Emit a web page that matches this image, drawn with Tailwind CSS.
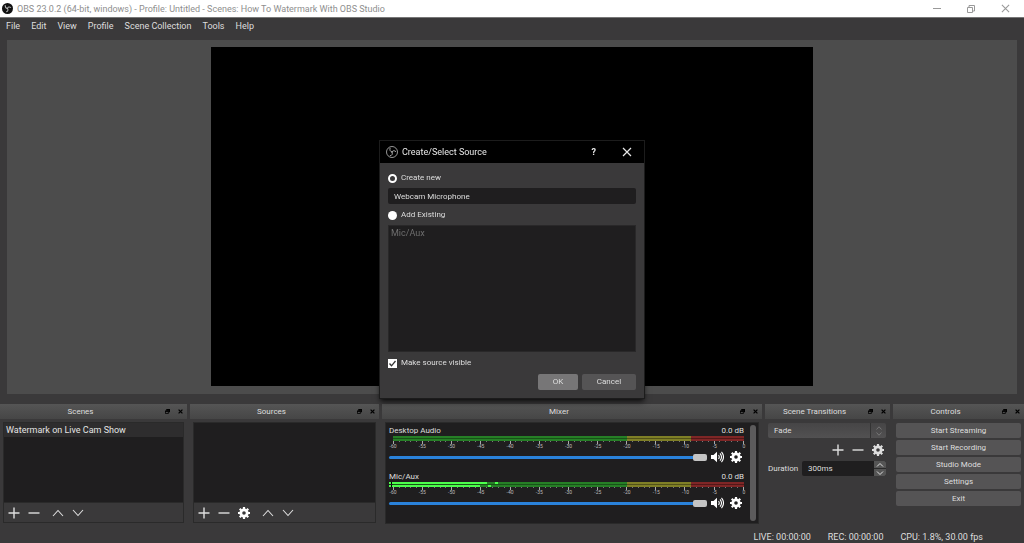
<!DOCTYPE html>
<html lang="en">
<head>
    <meta charset="UTF-8">
    <meta name="viewport" content="width=device-width, initial-scale=1.0">
    <title>OBS 23.0.2</title>
    <script src="https://cdn.jsdelivr.net/npm/@tailwindcss/browser@4"></script>
</head>
<body class="min-h-screen flex flex-col bg-[#3a393a] text-[#dedede] font-[Roboto,sans-serif] text-[8px] leading-3">

<!-- icon set -->
<svg class="hidden">
    <symbol id="logo" viewBox="0 0 24 24">
        <circle cx="12" cy="12" r="11" fill="#000" stroke="currentColor" stroke-width="1.6"/>
        <g fill="none" stroke="currentColor" stroke-width="1.800" stroke-linecap="round">
            <path d="M8 4.500c-1 4 .5 7 4 7.500"/>
            <path d="M19.500 11c-2.500-2.500-6-2.500-7.500 1"/>
            <path d="M8.500 19.500c4-.5 5.500-4 3.500-7.500"/>
        </g>
    </symbol>
    <symbol id="logo-solid" viewBox="0 0 24 24">
        <circle cx="12" cy="12" r="12" fill="#111"/>
        <g fill="none" stroke="currentColor" stroke-width="2.200" stroke-linecap="round">
            <path d="M7 5.500c0 4 1.500 6.500 5 6.500"/>
            <path d="M19 9.500c-3-1.500-6-1-7 2.500"/>
            <path d="M10 19c3-1 4-4 2-7"/>
        </g>
    </symbol>
    <symbol id="plus" viewBox="0 0 12 12"><path d="M6 .5v11M.5 6h11" stroke="currentColor" stroke-width="1.4"/></symbol>
    <symbol id="minus" viewBox="0 0 12 12"><path d="M.5 6h11" stroke="currentColor" stroke-width="1.4"/></symbol>
    <symbol id="up" viewBox="0 0 12 12"><path d="M1 9l5-5.500L11 9" fill="none" stroke="currentColor" stroke-width="1.1"/></symbol>
    <symbol id="down" viewBox="0 0 12 12"><path d="M1 3l5 5.500L11 3" fill="none" stroke="currentColor" stroke-width="1.1"/></symbol>
    <symbol id="gear" viewBox="0 0 12 12">
        <circle cx="6" cy="6" r="3.200" fill="none" stroke="currentColor" stroke-width="2.800"/>
        <path d="M6 0v2M6 10v2M0 6h2M10 6h2M1.760 1.760l1.400 1.400M8.840 8.840l1.400 1.400M1.760 10.240l1.400-1.400M8.840 3.160l1.400-1.400" stroke="currentColor" stroke-width="2.200"/>
    </symbol>
    <symbol id="speaker" viewBox="0 0 13 12">
        <path d="M0 4h2.500L6 .8v10.400L2.500 8H0z" fill="currentColor"/>
        <path d="M7.500 4q1.500 2 0 4M9 2.300q3 3.700 0 7.400M10.500 .8q4 5.200 0 10.400" fill="none" stroke="currentColor" stroke-width="1.100"/>
    </symbol>
    <symbol id="float" viewBox="0 0 6 6">
        <path d="M1.500 0H6v4H4.500V2h-3z" fill="currentColor"/>
        <path d="M.5 2.500h3.500v3H.5z" fill="none" stroke="currentColor"/>
        <path d="M0 2h4.500v1.300H0z" fill="currentColor"/>
    </symbol>
    <symbol id="close" viewBox="0 0 10 10"><path d="M1 1l8 8M9 1L1 9" stroke="currentColor" stroke-width="1.200"/></symbol>
    <symbol id="shut" viewBox="0 0 6 6"><path d="M.7 .7l4.600 4.600M5.300 .7L.7 5.300" stroke="currentColor" stroke-width="1.500"/></symbol>
    <symbol id="restore" viewBox="0 0 8 8"><path d="M.5 2.500h5v5h-5zM2 2V.5h5.500V6H6" fill="none" stroke="currentColor"/></symbol>
</svg>

<header class="h-[17px] flex items-center bg-white text-[#8e8e8e] pl-0.5 pr-3.5 text-[9px]">
    <svg class="size-[11px] text-[#bbb] mr-1"><use href="#logo-solid"/></svg>
    <h1>OBS 23.0.2 (64-bit, windows) - Profile: Untitled - Scenes: How To Watermark With OBS Studio</h1>
    <div class="ml-auto flex items-center gap-[26px] text-[#999]">
        <button aria-label="Minimize"><svg class="w-2 h-2" viewBox="0 0 8 8"><path d="M0 3.500h8" stroke="currentColor"/></svg></button>
        <button aria-label="Restore"><svg class="size-2"><use href="#restore"/></svg></button>
        <button aria-label="Close"><svg class="size-[9px]"><use href="#close"/></svg></button>
    </div>
</header>

<nav class="h-[23px] border-t border-[#777] flex items-start gap-[11px] px-1.5 pt-0.5 text-[9px]">
    <button>File</button>
    <button>Edit</button>
    <button>View</button>
    <button>Profile</button>
    <button>Scene Collection</button>
    <button>Tools</button>
    <button>Help</button>
</nav>

<main class="flex-1 min-h-0 flex justify-center mx-[7px] bg-[#4c4c4c] pt-[7px] pb-2">
    <div class="aspect-video h-[339px] bg-black"></div>
</main>

<div class="grid grid-cols-[minmax(0,187fr)_minmax(0,189fr)_minmax(0,380fr)_minmax(0,125fr)_minmax(0,131fr)] gap-[3px] mt-2.5">
    <section>
        <div class="h-[15px] flex items-center justify-end gap-2 px-1 bg-linear-to-b from-[#555] to-[#464646]">
            <h2 class="flex-1 text-center">Scenes</h2>
            <button class="text-black" aria-label="Float"><svg class="size-[5px]"><use href="#float"/></svg></button>
            <button class="text-black" aria-label="Close dock"><svg class="size-[5px]"><use href="#shut"/></svg></button>
        </div>
        <div class="mx-[3px] mt-[3px] border border-[#2a2a2a]">
            <ul class="h-[79px] bg-[#1f1e1f]">
                <li class="h-[14px] pl-0.5 bg-[#2e2d2e] text-[9px] leading-[14px] text-[#e4e4e4]">Watermark on Live Cam Show</li>
            </ul>
            <div class="h-5 flex items-center gap-2 pl-1 border-t border-[#2a2a2a]">
                <button aria-label="Add scene"><svg class="size-3"><use href="#plus"/></svg></button>
                <button aria-label="Remove scene"><svg class="size-3"><use href="#minus"/></svg></button>
                <button class="ml-1" aria-label="Move scene up"><svg class="size-3"><use href="#up"/></svg></button>
                <button aria-label="Move scene down"><svg class="size-3"><use href="#down"/></svg></button>
            </div>
        </div>
    </section>

    <section>
        <div class="h-[15px] flex items-center justify-end gap-2 px-1 bg-linear-to-b from-[#555] to-[#464646]">
            <h2 class="flex-1 text-center">Sources</h2>
            <button class="text-black" aria-label="Float"><svg class="size-[5px]"><use href="#float"/></svg></button>
            <button class="text-black" aria-label="Close dock"><svg class="size-[5px]"><use href="#shut"/></svg></button>
        </div>
        <div class="mx-[3px] mt-[3px] border border-[#2a2a2a]">
            <div class="h-[79px] bg-[#1f1e1f]"></div>
            <div class="h-5 flex items-center gap-2 pl-1 border-t border-[#2a2a2a]">
                <button aria-label="Add source"><svg class="size-3"><use href="#plus"/></svg></button>
                <button aria-label="Remove source"><svg class="size-3"><use href="#minus"/></svg></button>
                <button class="text-white" aria-label="Source properties"><svg class="size-3"><use href="#gear"/></svg></button>
                <button class="ml-1" aria-label="Move source up"><svg class="size-3"><use href="#up"/></svg></button>
                <button aria-label="Move source down"><svg class="size-3"><use href="#down"/></svg></button>
            </div>
        </div>
    </section>

    <section>
        <div class="h-[15px] flex items-center justify-end gap-2 px-1 bg-linear-to-b from-[#555] to-[#464646]">
            <h2 class="flex-1 text-center">Mixer</h2>
            <button class="text-black" aria-label="Float"><svg class="size-[5px]"><use href="#float"/></svg></button>
            <button class="text-black" aria-label="Close dock"><svg class="size-[5px]"><use href="#shut"/></svg></button>
        </div>
        <div class="mx-[3px] mt-[3px] h-[102px] flex bg-[#1f1e1f] border border-[#2a2a2a] pl-[3px] pr-0.5 py-0.5">
            <div id="mixer" class="flex-1"></div>
            <div class="w-1.5 ml-1.5 rounded-full bg-[#5c5b5c]"></div>
        </div>
    </section>

    <section>
        <div class="h-[15px] flex items-center justify-end gap-2 px-1 bg-linear-to-b from-[#555] to-[#464646]">
            <h2 class="flex-1 text-center">Scene Transitions</h2>
            <button class="text-black" aria-label="Float"><svg class="size-[5px]"><use href="#float"/></svg></button>
            <button class="text-black" aria-label="Close dock"><svg class="size-[5px]"><use href="#shut"/></svg></button>
        </div>
        <div class="pl-[3px] pr-1 pt-1">
            <div class="flex h-[15px] rounded-xs overflow-hidden bg-linear-to-b from-[#464546] to-[#525152]">
                <select aria-label="Transition" class="flex-1 appearance-none px-1.5 outline-none">
                    <option>Fade</option>
                </select>
                <div class="w-4 flex flex-col items-center justify-center border-l border-[#333] text-[#999]">
                    <svg class="size-1.5"><use href="#up"/></svg>
                    <svg class="size-1.5"><use href="#down"/></svg>
                </div>
            </div>
            <div class="h-[23px] flex items-center justify-end gap-2 pr-0.5">
                <button aria-label="Add transition"><svg class="size-3"><use href="#plus"/></svg></button>
                <button aria-label="Remove transition"><svg class="size-3"><use href="#minus"/></svg></button>
                <button aria-label="Transition properties"><svg class="size-3"><use href="#gear"/></svg></button>
            </div>
            <div class="flex items-center gap-1">
                <label for="duration">Duration</label>
                <div class="flex-1 flex h-[15px] rounded-xs overflow-hidden bg-[#1f1e1f]">
                    <input id="duration" value="300ms" class="flex-1 min-w-0 px-1.5 outline-none">
                    <div class="w-3 flex flex-col gap-px bg-[#2a2a2a]">
                        <button class="flex-1 flex items-center justify-center bg-[#555]" aria-label="Increase"><svg class="w-2 h-1.5" viewBox="0 0 8 6"><path d="M1 4.500l3-3 3 3" fill="none" stroke="currentColor"/></svg></button>
                        <button class="flex-1 flex items-center justify-center bg-[#555]" aria-label="Decrease"><svg class="w-2 h-1.5" viewBox="0 0 8 6"><path d="M1 1.500l3 3 3-3" fill="none" stroke="currentColor"/></svg></button>
                    </div>
                </div>
            </div>
        </div>
    </section>

    <section>
        <div class="h-[15px] flex items-center justify-end gap-2 px-1 bg-linear-to-b from-[#555] to-[#464646]">
            <h2 class="flex-1 text-center">Controls</h2>
            <button class="text-black" aria-label="Float"><svg class="size-[5px]"><use href="#float"/></svg></button>
            <button class="text-black" aria-label="Close dock"><svg class="size-[5px]"><use href="#shut"/></svg></button>
        </div>
        <div class="flex flex-col gap-0.5 px-[3px] pt-1">
            <button class="h-[15px] rounded-xs bg-[#555455]">Start Streaming</button>
            <button class="h-[15px] rounded-xs bg-[#555455]">Start Recording</button>
            <button class="h-[15px] rounded-xs bg-[#555455]">Studio Mode</button>
            <button class="h-[15px] rounded-xs bg-[#555455]">Settings</button>
            <button class="h-[15px] rounded-xs bg-[#555455]">Exit</button>
        </div>
    </section>
</div>

<footer class="h-[19px] flex items-end justify-end gap-[17px] pr-[41px] text-[9px]">
    <span>LIVE: 00:00:00</span>
    <span>REC: 00:00:00</span>
    <span>CPU: 1.8%, 30.00 fps</span>
</footer>

<div class="fixed inset-0 flex items-center justify-center">
    <form class="w-[266px] mb-1 bg-[#3a393a] border border-[#1c1c1c] shadow-md shadow-black/60" onsubmit="return false">
        <div class="h-[22px] flex items-center bg-black text-[9px] text-[#e8e8e8] pl-1.5 pr-3">
            <svg class="size-3 mr-1 text-[#bbb]"><use href="#logo"/></svg>
            <h2 class="flex-1">Create/Select Source</h2>
            <button type="button" class="font-bold mr-[26px]" aria-label="Help">?</button>
            <button type="button" aria-label="Close dialog"><svg class="size-[10px]"><use href="#close"/></svg></button>
        </div>
        <div class="px-2 pt-[9px] pb-2">
            <label class="flex items-center gap-1">
                <input type="radio" name="mode" checked class="appearance-none size-[9px] rounded-full bg-white checked:bg-transparent checked:border-2 checked:border-white">
                Create new
            </label>
            <input type="text" aria-label="Source name" value="Webcam Microphone" class="block w-full h-4 mt-1 px-1.5 rounded-xs bg-[#1f1e1f] outline-none">
            <label class="flex items-center gap-1 mt-[5px]">
                <input type="radio" name="mode" class="appearance-none size-[9px] rounded-full bg-white checked:bg-transparent checked:border-2 checked:border-white">
                Add Existing
            </label>
            <ul class="h-[127px] mt-1 px-0.5 pt-px bg-[#1f1e1f] border border-[#292829] text-[9px] text-[#6e6e6e]">
                <li>Mic/Aux</li>
            </ul>
            <label class="flex items-center gap-1 mt-[5px]">
                <span class="grid size-[9px]">
                    <input type="checkbox" checked class="appearance-none col-start-1 row-start-1 size-[9px] bg-white">
                    <svg class="col-start-1 row-start-1 size-[9px]" viewBox="0 0 9 9"><path d="M1.500 4.500l2 2.300L7.500 2" fill="none" stroke="#333" stroke-width="1.300"/></svg>
                </span>
                Make source visible
            </label>
            <div class="flex justify-end gap-1 mt-[5px]">
                <button class="w-10 h-4 rounded-xs bg-[#777677]">OK</button>
                <button type="button" class="w-[54px] h-4 rounded-xs bg-[#555455]">Cancel</button>
            </div>
        </div>
    </form>
</div>

<script>
    // level and peak are percentages of the meter's width
    const channels = [
        { name: 'Desktop Audio', left: [0, 0], right: [0, 0] },
        { name: 'Mic/Aux', left: [28, 29], right: [26, 27] },
    ];

    const level = ([now, peak]) => now ? `
        <div class="relative h-0.5">
            <div class="absolute inset-y-0 -left-1 bg-[#4cff4c]" style="width: ${now}%"></div>
            <div class="absolute inset-y-0 w-[3px] bg-[#4cff4c]" style="left: ${peak}%"></div>
            <div class="absolute inset-y-0 -left-0.5 w-px bg-black"></div>
        </div>` : '<div class="h-0.5"></div>';

    let ticks = '';
    for (let db = 0; db <= 60; db++) {
        ticks += `<div class="w-px ${db % 5 ? 'h-px bg-[#777]' : 'h-[3px] bg-[#aaa]'}"></div>`;
    }

    let labels = '';
    for (let db = -60; db <= 0; db += 5) {
        labels += `<span class="w-0 flex justify-center">${db}</span>`;
    }

    document.getElementById('mixer').innerHTML = channels.map(c => `
        <div class="h-[46px]">
            <div class="flex justify-between h-[11px]"><span>${c.name}</span><span>0.0 dB</span></div>
            <div class="ml-1 grid">
                <div class="col-start-1 row-start-1 flex">
                    <div class="w-[66.67%] bg-[#267f26]"></div>
                    <div class="w-[18.33%] bg-[#7f7f26]"></div>
                    <div class="flex-1 bg-[#7f2626]"></div>
                </div>
                <div class="col-start-1 row-start-1">${level(c.left)}<div class="h-px bg-black/35"></div>${level(c.right)}</div>
            </div>
            <div class="ml-1 flex justify-between h-0.5">${ticks}</div>
            <div class="ml-1 flex justify-between h-1.5 text-[5px] leading-[6px] text-[#bbb]">${labels}</div>
            <div class="flex items-center gap-1 mt-0.5 text-white">
                <input type="range" value="100" aria-label="${c.name} volume" class="flex-1 min-w-0 appearance-none h-[3px] rounded-full bg-[#2a82da] [&::-webkit-slider-thumb]:appearance-none [&::-webkit-slider-thumb]:w-3.5 [&::-webkit-slider-thumb]:h-[7px] [&::-webkit-slider-thumb]:rounded-xs [&::-webkit-slider-thumb]:bg-[#c4c4c4]">
                <button aria-label="Mute ${c.name}"><svg class="w-[13px] h-3"><use href="#speaker"/></svg></button>
                <button class="ml-0.5 mr-0.5" aria-label="${c.name} settings"><svg class="size-3"><use href="#gear"/></svg></button>
            </div>
        </div>`).join('');
</script>
</body>
</html>
